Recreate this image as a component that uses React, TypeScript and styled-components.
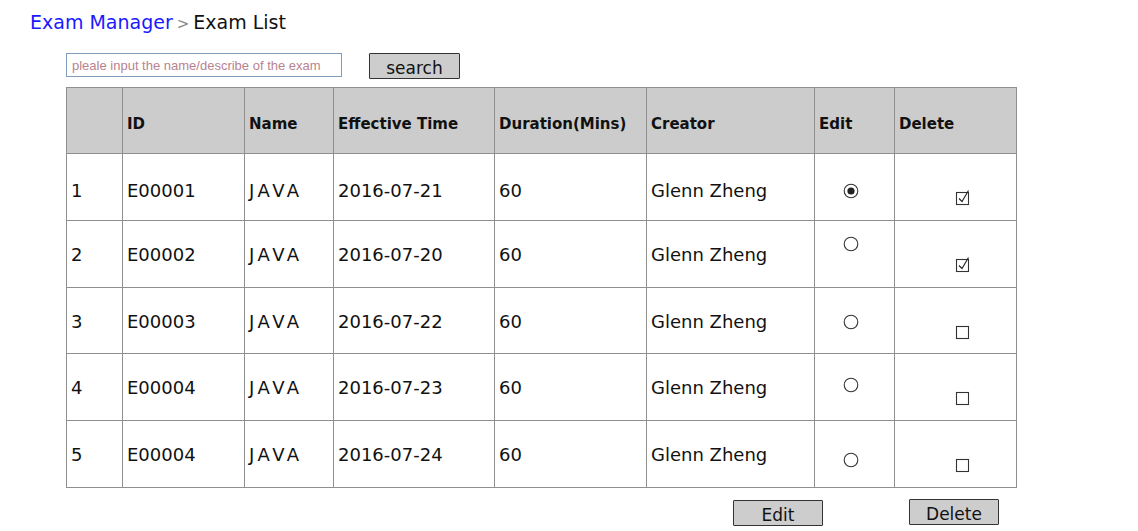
import React from 'react';
import styled, {createGlobalStyle} from 'styled-components';

const GlobalStyle = createGlobalStyle`
  body {
    margin: 0;
    background: #fff;
    font-family: "DejaVu Sans", "Liberation Sans", sans-serif;
    color: #111;
  }
`

type Exam = {
    no: number
    id: string
    name: string
    time: string
    duration: number
    creator: string
    edit: boolean
    del: boolean
    radioTop: number
    textTop: number
    height: number
}

const exams: Exam[] = [
    {no: 1, id: 'E00001', name: 'JAVA', time: '2016-07-21', duration: 60, creator: 'Glenn Zheng', edit: true, del: true, radioTop: 29, textTop: 6, height: 67},
    {no: 2, id: 'E00002', name: 'JAVA', time: '2016-07-20', duration: 60, creator: 'Glenn Zheng', edit: false, del: true, radioTop: 15, textTop: 1, height: 67},
    {no: 3, id: 'E00003', name: 'JAVA', time: '2016-07-22', duration: 60, creator: 'Glenn Zheng', edit: false, del: false, radioTop: 26, textTop: 2, height: 66},
    {no: 4, id: 'E00004', name: 'JAVA', time: '2016-07-23', duration: 60, creator: 'Glenn Zheng', edit: false, del: false, radioTop: 23, textTop: 0, height: 67},
    {no: 5, id: 'E00004', name: 'JAVA', time: '2016-07-24', duration: 60, creator: 'Glenn Zheng', edit: false, del: false, radioTop: 31, textTop: 0, height: 67},
]

const columns = [
    {title: '', width: 56},
    {title: 'ID', width: 122},
    {title: 'Name', width: 89},
    {title: 'Effective Time', width: 161},
    {title: 'Duration(Mins)', width: 152},
    {title: 'Creator', width: 168},
    {title: 'Edit', width: 80},
    {title: 'Delete', width: 122},
]

const Radio = ({checked}: { checked: boolean }) => (
    <svg width="16" height="16" viewBox="0 0 16 16">
        <circle cx="8" cy="8" r="6.8" fill="#fff" stroke="#333" strokeWidth="1.1"/>
        {checked && <circle cx="8" cy="8" r="3.6" fill="#222"/>}
    </svg>
)

const Check = ({checked}: { checked: boolean }) => (
    <svg width="18" height="18" viewBox="0 0 18 18">
        <rect x="2.5" y="4.5" width="12" height="12" fill="#fff" stroke="#333" strokeWidth="1.1"/>
        {checked && <path d="M5 10.5 L8 13.5 L14.5 2.5" fill="none" stroke="#222" strokeWidth="1.1"/>}
    </svg>
)

export default function App() {
    return (
        <Page>
            <GlobalStyle/>
            <Breadcrumb>
                <Crumb>Exam Manager</Crumb>
                <Arrow>&gt;</Arrow>
                <Current>Exam List</Current>
            </Breadcrumb>

            <Content>
                <SearchBar>
                    <SearchInput placeholder="pleale input the name/describe of the exam"/>
                    <SketchButton $width={91}>search</SketchButton>
                </SearchBar>

                <Table>
                    <colgroup>
                        {columns.map((c, i) => <col key={i} style={{width: c.width}}/>)}
                    </colgroup>
                    <thead>
                    <tr>
                        {columns.map((c, i) => <Th key={i}>{c.title}</Th>)}
                    </tr>
                    </thead>
                    <tbody>
                    {exams.map(e => (
                        <Row key={e.no} $height={e.height}>
                            <Td $top={e.textTop}>{e.no}</Td>
                            <Td $top={e.textTop}>{e.id}</Td>
                            <Td $top={e.textTop} $wide>{e.name}</Td>
                            <Td $top={e.textTop}>{e.time}</Td>
                            <Td $top={e.textTop}>{e.duration}</Td>
                            <Td $top={e.textTop}>{e.creator}</Td>
                            <IconCell>
                                <RadioSlot $top={e.radioTop}><Radio checked={e.edit}/></RadioSlot>
                            </IconCell>
                            <IconCell>
                                <CheckSlot><Check checked={e.del}/></CheckSlot>
                            </IconCell>
                        </Row>
                    ))}
                    </tbody>
                </Table>

                <Actions>
                    <SketchButton $width={90}>Edit</SketchButton>
                    <SketchButton $width={90} $raise>Delete</SketchButton>
                </Actions>
            </Content>
        </Page>
    );
}

const Page = styled.div`
  width: 1138px;
  height: 531px;
  overflow: hidden;
  padding: 11px 0 0 30px;
  box-sizing: border-box;
`

const Breadcrumb = styled.div`
  display: flex;
  align-items: baseline;
  gap: 4px;
  font-size: 19px;
  height: 27px;
`

const Crumb = styled.span`
  color: #1a1aff;
`

const Arrow = styled.span`
  color: #888;
  font-size: 15px;
`

const Current = styled.span`
  color: #111;
`

const Content = styled.div`
  margin-left: 36px;
  width: 950px;
`

const SearchBar = styled.div`
  display: flex;
  align-items: flex-start;
  gap: 27px;
  margin-top: 15px;
  height: 34px;
`

const SearchInput = styled.input`
  width: 276px;
  height: 24px;
  box-sizing: border-box;
  border: 1px solid #7f9cbb;
  padding: 0 5px;
  font-family: "Liberation Sans", Arial, sans-serif;
  font-size: 13px;
  outline: none;

  &::placeholder {
    color: #b8838f;
  }
`

const SketchButton = styled.button<{ $width: number; $raise?: boolean }>`
  width: ${p => p.$width}px;
  height: 26px;
  box-sizing: border-box;
  background: #cdcdcd;
  border: 1.5px solid #333;
  border-radius: 1px;
  font-family: "DejaVu Sans", sans-serif;
  font-size: 17px;
  color: #111;
  padding: 3px 0 0;
  line-height: 20px;
  margin-top: ${p => p.$raise ? -1 : 0}px;
`

const Table = styled.table`
  width: 951px;
  table-layout: fixed;
  border-collapse: collapse;
  border: 1px solid #8f8f8f;
`

const Th = styled.th`
  height: 66px;
  background: #cccccc;
  border: 1px solid #8f8f8f;
  text-align: left;
  padding: 6px 0 0 4px;
  box-sizing: border-box;
  font-size: 15px;
  font-weight: bold;
  color: #111;
  white-space: nowrap;
`

const Row = styled.tr<{ $height: number }>`
  height: ${p => p.$height}px;
`

const Td = styled.td<{ $wide?: boolean; $top: number }>`
  border: 1px solid #8f8f8f;
  padding: ${p => p.$top}px 0 0 4px;
  font-size: 18px;
  letter-spacing: ${p => p.$wide ? '3.5px' : '0'};
  white-space: nowrap;
  color: #111;
`

const IconCell = styled.td`
  border: 1px solid #8f8f8f;
  padding: 0;
  vertical-align: top;
`

const RadioSlot = styled.div<{ $top: number }>`
  display: flex;
  justify-content: center;
  padding: ${p => p.$top}px 8px 0 0;
  height: 16px;
`

const CheckSlot = styled.div`
  display: flex;
  justify-content: center;
  padding: 34px 0 0 14px;
  height: 18px;
`

const Actions = styled.div`
  display: flex;
  justify-content: flex-end;
  gap: 86px;
  padding-right: 17px;
  margin-top: 12px;
`
